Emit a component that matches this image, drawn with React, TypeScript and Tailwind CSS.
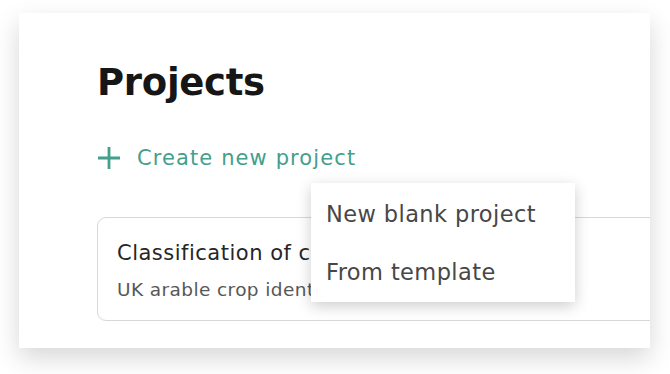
import React from 'react'

export default function App() {
  return (
    <div className="min-h-[374px] w-[670px] bg-white pt-[13px] pl-[19px]" style={{ fontFamily: '"DejaVu Sans", "Noto Sans", sans-serif' }}>
      <div className="relative h-[335px] w-[631px] overflow-hidden bg-white shadow-[0_10px_24px_rgba(0,0,0,0.16)]">
        <div className="pl-[78px] pt-[48px]">
          <h1 className="text-[37px] font-bold leading-[44px] tracking-[-0.3px] text-[#161616]">Projects</h1>

          <button className="mt-[40px] flex h-[26px] items-center gap-[16px] text-[#43a08c]">
            <svg width="24" height="24" viewBox="0 0 24 24" fill="none" stroke="currentColor" strokeWidth="2.8">
              <path d="M12 1v22M1 12h22" />
            </svg>
            <span className="text-[21px] leading-[26px] tracking-[1.1px]">Create new project</span>
          </button>

          <div className="mt-[46px] w-[620px] rounded-[9px] border border-[#d8d8d8] px-[19px] pt-[22px] pb-[19px]">
            <div className="text-[21px] leading-[26px] tracking-[0.5px] text-[#262626]">Classification of crops</div>
            <div className="mt-[13px] text-[18.5px] leading-[22px] tracking-[0.4px] text-[#575757]">UK arable crop identification</div>
          </div>
        </div>

        {/* dropdown menu over the card */}
        <div className="absolute left-[292px] top-[170px] flex h-[119px] w-[264px] flex-col gap-[30px] bg-white pl-[15px] pt-[17px] text-[22.5px] leading-[28px] tracking-[0.4px] text-[#474747] shadow-[0_4px_14px_rgba(0,0,0,0.2)]">
          <div>New blank project</div>
          <div>From template</div>
        </div>
      </div>
    </div>
  )
}
